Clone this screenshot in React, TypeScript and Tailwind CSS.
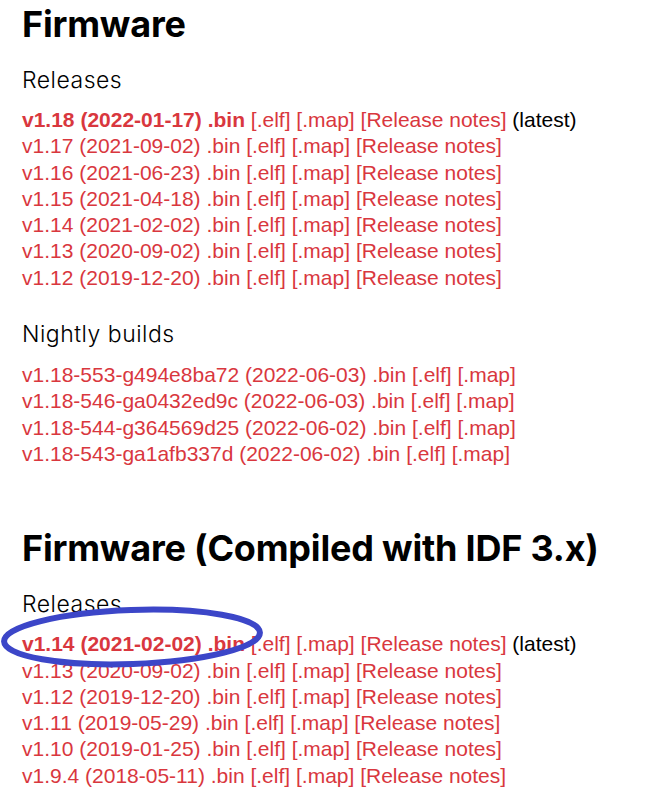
type Build = { name: string; bold?: boolean; notes?: boolean; latest?: boolean };

const releases: Build[] = [
  { name: "v1.18 (2022-01-17)", bold: true, notes: true, latest: true },
  { name: "v1.17 (2021-09-02)", notes: true },
  { name: "v1.16 (2021-06-23)", notes: true },
  { name: "v1.15 (2021-04-18)", notes: true },
  { name: "v1.14 (2021-02-02)", notes: true },
  { name: "v1.13 (2020-09-02)", notes: true },
  { name: "v1.12 (2019-12-20)", notes: true },
];

const nightly: Build[] = [
  { name: "v1.18-553-g494e8ba72 (2022-06-03)" },
  { name: "v1.18-546-ga0432ed9c (2022-06-03)" },
  { name: "v1.18-544-g364569d25 (2022-06-02)" },
  { name: "v1.18-543-ga1afb337d (2022-06-02)" },
];

const idf3: Build[] = [
  { name: "v1.14 (2021-02-02)", bold: true, notes: true, latest: true },
  { name: "v1.13 (2020-09-02)", notes: true },
  { name: "v1.12 (2019-12-20)", notes: true },
  { name: "v1.11 (2019-05-29)", notes: true },
  { name: "v1.10 (2019-01-25)", notes: true },
  { name: "v1.9.4 (2018-05-11)", notes: true },
];

function BuildList({ items }: Readonly<{ items: Build[] }>) {
  return (
    <ul className="font-['Liberation_Sans',Arial,sans-serif] text-[21px] leading-[26.3px] text-[#d9373e]">
      {items.map((item) => (
        <li key={item.name} className="whitespace-nowrap">
          <a className={item.bold ? "font-bold" : ""}>
            {item.name} .bin
          </a>{" "}
          <a>[.elf]</a> <a>[.map]</a>
          {item.notes && (
            <>
              {" "}
              <a>[Release notes]</a>
            </>
          )}
          {item.latest && <span className="text-black"> (latest)</span>}
        </li>
      ))}
    </ul>
  );
}

function Heading({ children, className = "" }: Readonly<{ children: string; className?: string }>) {
  return (
    <h1 className={`text-[36px] font-bold leading-[44px] tracking-[-0.2px] text-black ${className}`}>{children}</h1>
  );
}

function SubHeading({ children, className = "" }: Readonly<{ children: string; className?: string }>) {
  return (
    <h2 className={`text-[23px] font-light leading-[30px] tracking-[0.5px] text-black ${className}`}>{children}</h2>
  );
}

export default function App() {
  return (
    <div className="min-h-[805px] bg-white pl-[22px] pt-[2px] font-['Inter',sans-serif]">
      <Heading>Firmware</Heading>
      <SubHeading className="mt-[19px]">Releases</SubHeading>
      <div className="mt-[12px]">
        <BuildList items={releases} />
      </div>
      <SubHeading className="mt-[28px]">Nightly builds</SubHeading>
      <div className="mt-[13px]">
        <BuildList items={nightly} />
      </div>

      <Heading className="mt-[59px]">Firmware (Compiled with IDF 3.x)</Heading>
      <SubHeading className="mt-[19px]">Releases</SubHeading>
      <div className="relative mt-[12px]">
        <BuildList items={idf3} />
        <svg
          className="pointer-events-none absolute left-[-22px] top-[-26px] h-[64px] w-[268px]"
          viewBox="0 0 268 64"
        >
          <ellipse
            cx="132"
            cy="32"
            rx="128"
            ry="27"
            fill="none"
            stroke="#3c46c8"
            strokeWidth="6"
            transform="rotate(-2 132 32)"
          />
        </svg>
      </div>
    </div>
  );
}
